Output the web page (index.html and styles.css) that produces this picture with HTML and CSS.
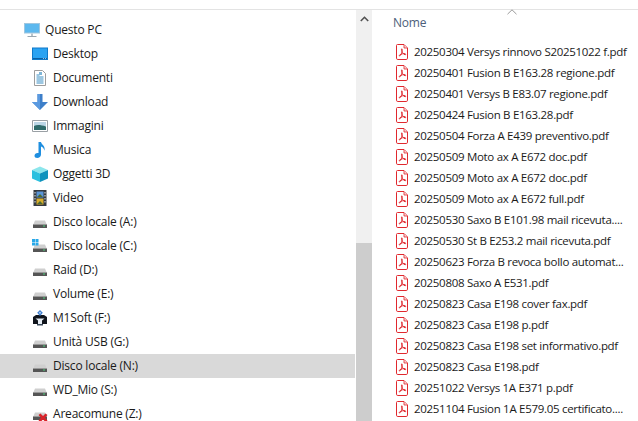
FILE: index.html
```html
<!DOCTYPE html>
<html lang="it">
<head>
<meta charset="utf-8">
<title>Questo PC</title>
<link rel="stylesheet" href="styles.css">
</head>
<body>
<svg class="defs" width="0" height="0" aria-hidden="true">
  <defs>
    <symbol id="drive" viewBox="0 0 16 16">
      <path d="M1.500 10 3 6.500h10L14.500 10z" fill="#cfcfcf"/>
      <path d="M1 10h14v4H1z" fill="#555"/>
      <path d="M1 10h14v1H1z" fill="#999"/>
      <path d="M11 11.500h2v1h-2z" fill="#4ad07a"/>
    </symbol>
    <symbol id="pdf" viewBox="0 0 12 16">
      <path d="M1.500.5h6.500L11.500 4v10.200a1.300 1.300 0 0 1-1.300 1.300H1.800a1.300 1.300 0 0 1-1.300-1.300V1.500a1 1 0 0 1 1-1z" fill="#fff" stroke="#e0282e"/>
      <path d="M8 .8V4h3.200" fill="#fbd9d9" stroke="#e0282e" stroke-width=".8"/>
      <path d="M6 4.800c-.7 0-.7 1.200 0 2.600.6 1.300 1.600 3 3 3.300.9.200 1-.8.100-1-1.500-.3-3.900.1-5.400 1.200-.8.6-.3 1.400.4.800 1-.9 1.900-3.300 2.100-5 .1-1.200 0-1.900-.2-1.900z" fill="none" stroke="#e0282e" stroke-width="1"/>
    </symbol>
  </defs>
</svg>
<div class="topline"></div>
<main class="panes">
  <nav class="tree">
    <div class="node root">
      <svg class="ico" viewBox="0 0 16 16"><path d="M0 1h16v10.500H0z" fill="#9fc6df"/><path d="M1 2h14v8.500H1z" fill="#5cb8ee"/><path d="M7 11.500h2V14H7z" fill="#b8c4cc"/><path d="M3.500 14h9v1h-9z" fill="#9aa7b0"/></svg>
      <span>Questo PC</span>
    </div>
    <div class="node">
      <svg class="ico" viewBox="0 0 16 16"><path d="M0 1.500h16V14H0z" fill="#0f79c9"/><path d="M1 2.500h14V12H1z" fill="#2aa3f2"/><path d="M1 12h14v1H1z" fill="#0a5fa3"/><path d="M11 12.300h.8v.6H11zM13 12.300h.8v.6H13z" fill="#fff"/></svg>
      <span>Desktop</span>
    </div>
    <div class="node">
      <svg class="ico" viewBox="0 0 16 16"><path d="M2.500.500h8L13.500 3.500v12h-11z" fill="#fff" stroke="#9d9d9d"/><path d="M4.500 5h3M4.500 7h7M4.500 9h7M4.500 11h7M4.500 13h7" stroke="#3b8fc4"/><path d="M7 2h3v3H7z" fill="#7fb6d8"/></svg>
      <span>Documenti</span>
    </div>
    <div class="node">
      <svg class="ico" viewBox="0 0 16 16"><path d="M5.500 0h5v8H16l-8 8-8-8h5.500z" fill="#3d7fc9"/><path d="M5.500 0h2.500v15.900L0 8h5.500z" fill="#5b9ae0"/></svg>
      <span>Download</span>
    </div>
    <div class="node">
      <svg class="ico" viewBox="0 0 16 16"><path d="M.5 2.500h15v11H.5z" fill="#fff" stroke="#9aa0a5"/><path d="M2 4h12v4H2z" fill="#bcd6e6"/><path d="M2 8c3-1.500 7-1 12 .5V12H2z" fill="#2f6b6b"/></svg>
      <span>Immagini</span>
    </div>
    <div class="node">
      <svg class="ico" viewBox="0 0 16 16"><path d="M6.500 0h2.500c.4 2.800 4.800 3.800 3.400 8.800-.5-2.600-1.900-3.700-3.400-4.200v8c0 2-1.800 3.400-3.800 3.400-1.600 0-2.700-1-2.700-2.300 0-1.800 2-3.200 4-2.600z" fill="#1f8fe0"/></svg>
      <span>Musica</span>
    </div>
    <div class="node">
      <svg class="ico" viewBox="0 0 16 16"><path d="M0 4 8 .5 16 4 8 7.500z" fill="#8ce6ec"/><path d="M0 4 8 7.500V16L0 12.500z" fill="#2cc0df"/><path d="M16 4 8 7.500V16l8-3.500z" fill="#0f93bd"/></svg>
      <span>Oggetti 3D</span>
    </div>
    <div class="node">
      <svg class="ico" viewBox="0 0 16 16"><path d="M1.500 0h13v16h-13z" fill="#343a40"/><path d="M4.500 1.500h7v6h-7z" fill="#5a96d8"/><path d="M4.500 8.500h7v6h-7z" fill="#d6ad2c"/><path d="M5 7l3-3 3 3zM5 14l3-3 3 3z" fill="#4c6a34"/><path d="M2.500 2h1v1.500h-1zM2.500 5h1v1.500h-1zM2.500 8h1v1.500h-1zM2.500 11h1v1.500h-1zM12.500 2h1v1.500h-1zM12.500 5h1v1.500h-1zM12.500 8h1v1.500h-1zM12.500 11h1v1.500h-1z" fill="#dfe6ea"/></svg>
      <span>Video</span>
    </div>
    <div class="node"><svg class="ico"><use href="#drive"/></svg><span>Disco locale (A:)</span></div>
    <div class="node">
      <svg class="ico" viewBox="0 0 16 16"><use href="#drive"/><path d="M0 1h3v3H0zM3.500 1h3v3h-3zM0 4.500h3v3H0zM3.500 4.500h3v3h-3z" fill="#29a8e8"/></svg>
      <span>Disco locale (C:)</span>
    </div>
    <div class="node"><svg class="ico"><use href="#drive"/></svg><span>Raid (D:)</span></div>
    <div class="node"><svg class="ico"><use href="#drive"/></svg><span>Volume (E:)</span></div>
    <div class="node">
      <svg class="ico" viewBox="0 0 16 16"><path d="M4 5h8l3 2v7H1V7z" fill="#10151c"/><path d="M8 0l2.800 2.800L8 6 5.200 2.800z" fill="#3f7fd0"/><path d="M8 1.800l1 1-1 1.200-1-1.200z" fill="#cfe2f5"/><path d="M3.500 8.500h9l-2.500 2V14H6v-3.500z" fill="#e6edf4"/><path d="M5 14h6v1.500H5z" fill="#3a4a5a"/></svg>
      <span>M1Soft (F:)</span>
    </div>
    <div class="node"><svg class="ico"><use href="#drive"/></svg><span>Unità USB (G:)</span></div>
    <div class="node selected"><svg class="ico"><use href="#drive"/></svg><span>Disco locale (N:)</span></div>
    <div class="node"><svg class="ico"><use href="#drive"/></svg><span>WD_Mio (S:)</span></div>
    <div class="node">
      <svg class="ico" viewBox="0 0 16 16"><use href="#drive"/><path d="M6.500 9 8.500 7.500 11 10l2.500-2.500L15.500 9 13 11.700l2.500 2.800-2 1.500L11 13.500 8.500 16l-2-1.500L9 11.700z" fill="#d8232a"/></svg>
      <span>Areacomune (Z:)</span>
    </div>
  </nav>
  <div class="scrollbar">
    <div class="arrow"><svg viewBox="0 0 9 6" width="9" height="6"><path d="M.8 5 4.500 1.300 8.200 5" fill="none" stroke="#505050" stroke-width="1.600"/></svg></div>
    <div class="track"></div>
    <div class="thumb"></div>
  </div>
  <section class="files">
    <header class="head">
      <span>Nome</span>
      <svg class="sort" viewBox="0 0 10 6" width="10" height="6"><path d="M.5 5.200 5 .8l4.500 4.400" fill="none" stroke="#9a9a9a"/></svg>
    </header>
    <ul class="list">
      <li><svg class="pdf"><use href="#pdf"/></svg><span>20250304 Versys rinnovo S20251022 f.pdf</span></li>
      <li><svg class="pdf"><use href="#pdf"/></svg><span>20250401 Fusion B E163.28 regione.pdf</span></li>
      <li><svg class="pdf"><use href="#pdf"/></svg><span>20250401 Versys B E83.07 regione.pdf</span></li>
      <li><svg class="pdf"><use href="#pdf"/></svg><span>20250424 Fusion B E163.28.pdf</span></li>
      <li><svg class="pdf"><use href="#pdf"/></svg><span>20250504 Forza A E439 preventivo.pdf</span></li>
      <li><svg class="pdf"><use href="#pdf"/></svg><span>20250509 Moto ax A E672 doc.pdf</span></li>
      <li><svg class="pdf"><use href="#pdf"/></svg><span>20250509 Moto ax A E672 doc.pdf</span></li>
      <li><svg class="pdf"><use href="#pdf"/></svg><span>20250509 Moto ax A E672 full.pdf</span></li>
      <li><svg class="pdf"><use href="#pdf"/></svg><span>20250530 Saxo B E101.98 mail ricevuta....</span></li>
      <li><svg class="pdf"><use href="#pdf"/></svg><span>20250530 St B E253.2 mail ricevuta.pdf</span></li>
      <li><svg class="pdf"><use href="#pdf"/></svg><span>20250623 Forza B revoca bollo automat...</span></li>
      <li><svg class="pdf"><use href="#pdf"/></svg><span>20250808 Saxo A E531.pdf</span></li>
      <li><svg class="pdf"><use href="#pdf"/></svg><span>20250823 Casa E198 cover fax.pdf</span></li>
      <li><svg class="pdf"><use href="#pdf"/></svg><span>20250823 Casa E198 p.pdf</span></li>
      <li><svg class="pdf"><use href="#pdf"/></svg><span>20250823 Casa E198 set informativo.pdf</span></li>
      <li><svg class="pdf"><use href="#pdf"/></svg><span>20250823 Casa E198.pdf</span></li>
      <li><svg class="pdf"><use href="#pdf"/></svg><span>20251022 Versys 1A E371 p.pdf</span></li>
      <li><svg class="pdf"><use href="#pdf"/></svg><span>20251104 Fusion 1A E579.05 certificato....</span></li>
    </ul>
  </section>
</main>
</body>
</html>
```
FILE: styles.css
```css
* { box-sizing: border-box; }
html, body { margin: 0; height: 100%; overflow: hidden; background: #fff; }
body {
  font-family: "Open Sans", "Noto Sans", sans-serif;
  font-size: 12px;
  letter-spacing: -0.2px;
  color: #1a1a1a;
}
.defs { position: absolute; }
.topline { height: 10px; border-bottom: 1px solid #e3e3e3; }
.panes { display: flex; height: 411px; }
.tree { width: 355px; padding-top: 8px; flex: none; }
.node {
  display: flex;
  align-items: center;
  height: 24px;
  padding-left: 32px;
  gap: 5px;
  white-space: nowrap;
}
.node span { margin-bottom: 2px; }
.node.root { padding-left: 24px; }
.node.selected { background: #d9d9d9; }
.ico { width: 16px; height: 16px; flex: none; }
.scrollbar {
  width: 16px;
  margin-left: 1px;
  flex: none;
  display: flex;
  flex-direction: column;
  background: #f0f0f0;
}
.arrow { height: 17px; display: flex; align-items: center; justify-content: center; padding-top: 1px; }
.track { height: 216px; }
.thumb { flex: 1; background: #cdcdcd; }
.files { flex: 1; min-width: 0; position: relative; }
.head { height: 31px; padding: 0 0 7px 21px; display: flex; align-items: center; color: #4c607a; }
.sort { position: absolute; left: 135px; top: -1px; }
.list { list-style: none; margin: 0; padding: 0 0 0 24px; font-size: 11.5px; letter-spacing: -0.3px; }
.list li { display: flex; align-items: center; height: 21px; gap: 6px; white-space: nowrap; }
.pdf { width: 12px; height: 16px; flex: none; }
```
